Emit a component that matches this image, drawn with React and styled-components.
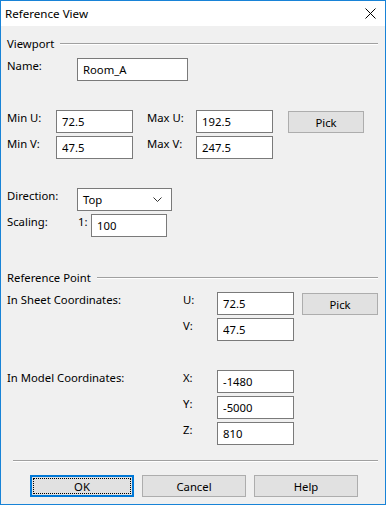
import React from 'react'
import styled, { createGlobalStyle, css } from 'styled-components'

const GlobalStyle = createGlobalStyle`
  html, body {
    margin: 0;
    padding: 0;
    background: #ffffff;
  }
  * {
    box-sizing: border-box;
  }
`

const FONT = `"Noto Sans", "Liberation Sans", sans-serif`
const SIZE = '11.3px'

const Window = styled.div`
  width: 386px;
  height: 505px;
  border: 1px solid #1883d7;
  background: #f0f0f0;
  display: flex;
  flex-direction: column;
  font-family: ${FONT};
  font-size: ${SIZE};
  color: #000;
`

const TitleBar = styled.div`
  height: 25px;
  background: #fff;
  display: flex;
  align-items: center;
  justify-content: space-between;
  padding: 0 9px 0 4px;
  flex-shrink: 0;
`

const Title = styled.span`
  font-size: 11.6px;
  line-height: 16px;
  padding-top: 1px;
`

const Client = styled.div`
  flex: 1;
  display: flex;
  flex-direction: column;
  padding: 0 7px 0 6px;
`

const GroupHeader = styled.div`
  display: flex;
  align-items: center;
  gap: 6px;
  height: 16px;
  margin-top: ${p => p.$top}px;
  line-height: 16px;

  &::after {
    content: '';
    flex: 1;
    height: 0;
    border-top: 1px solid #a0a0a0;
    border-bottom: 1px solid #ffffff;
  }
`

const Row = styled.div`
  display: flex;
  align-items: flex-start;
  margin-top: ${p => p.$top}px;
`

const Label = styled.span`
  width: ${p => p.$w}px;
  flex-shrink: 0;
  line-height: 16px;
  white-space: nowrap;
  margin-left: ${p => p.$ml || 0}px;
`

const fieldBox = css`
  height: 23px;
  border: 1px solid #7a7a7a;
  background: #fff;
  font-family: ${FONT};
  font-size: ${SIZE};
  color: #000;
`

const Field = styled.input`
  ${fieldBox};
  width: ${p => p.$w}px;
  padding: 0 0 0 5px;
  margin: 0;
  outline: none;
`

const Select = styled.div`
  ${fieldBox};
  width: ${p => p.$w}px;
  display: flex;
  align-items: center;
  justify-content: space-between;
  padding: 0 9px 0 5px;
`

const Button = styled.button`
  position: relative;
  width: ${p => p.$w}px;
  height: 22px;
  margin: ${p => p.$dy || 0}px 0 0 ${p => p.$ml || 0}px;
  padding: 0;
  background: #e1e1e1;
  border: 1px solid #adadad;
  font-family: ${FONT};
  font-size: ${SIZE};
  color: #000;

  ${p => p.$default && css`
    border: 2px solid #0078d7;
    &::after {
      content: '';
      position: absolute;
      inset: 1px;
      border: 1px dotted #000;
    }
  `}
`

const Separator = styled.div`
  margin: 15px 0 0 6px;
  border-top: 1px solid #a0a0a0;
  border-bottom: 1px solid #ffffff;
`

const ButtonBar = styled.div`
  display: flex;
  gap: 8px;
  margin: 13px 0 0 23px;
`

const CloseIcon = () => (
  <svg width="11" height="11" viewBox="0 0 11 11">
    <path d="M0.5 0.5 L10.5 10.5 M10.5 0.5 L0.5 10.5" stroke="#000" strokeWidth="1" fill="none" />
  </svg>
)

const Chevron = () => (
  <svg width="9" height="5" viewBox="0 0 9 5">
    <path d="M0.5 0.5 L4.5 4.5 L8.5 0.5" stroke="#333" strokeWidth="1" fill="none" />
  </svg>
)

const App = () => (
  <>
    <GlobalStyle />
    <Window>
      <TitleBar>
        <Title>Reference View</Title>
        <CloseIcon />
      </TitleBar>
      <Client>
        <GroupHeader $top={10}>Viewport</GroupHeader>
        <Row $top={6}>
          <Label $w={70}>Name:</Label>
          <Field $w={111} readOnly value="Room_A" />
        </Row>

        <Row $top={29}>
          <Label $w={49}>Min U:</Label>
          <Field $w={77} readOnly value="72.5" />
          <Label $w={49} $ml={14}>Max U:</Label>
          <Field $w={77} readOnly value="192.5" />
          <Button $w={76} $ml={15} $dy={1}>Pick</Button>
        </Row>
        <Row $top={3}>
          <Label $w={49}>Min V:</Label>
          <Field $w={77} readOnly value="47.5" />
          <Label $w={49} $ml={14}>Max V:</Label>
          <Field $w={77} readOnly value="247.5" />
        </Row>

        <Row $top={29}>
          <Label $w={70}>Direction:</Label>
          <Select $w={95}>
            <span>Top</span>
            <Chevron />
          </Select>
        </Row>
        <Row $top={3}>
          <Label $w={71}>Scaling:</Label>
          <Label $w={13}>1:</Label>
          <Field $w={76} readOnly value="100" />
        </Row>

        <GroupHeader $top={33}>Reference Point</GroupHeader>
        <Row $top={6}>
          <Label $w={176}>In Sheet Coordinates:</Label>
          <Label $w={34}>U:</Label>
          <Field $w={77} readOnly value="72.5" />
          <Button $w={77} $ml={8} $dy={1}>Pick</Button>
        </Row>
        <Row $top={3}>
          <Label $w={176} />
          <Label $w={34}>V:</Label>
          <Field $w={77} readOnly value="47.5" />
        </Row>

        <Row $top={29}>
          <Label $w={176}>In Model Coordinates:</Label>
          <Label $w={34}>X:</Label>
          <Field $w={77} readOnly value="-1480" />
        </Row>
        <Row $top={3}>
          <Label $w={176} />
          <Label $w={34}>Y:</Label>
          <Field $w={77} readOnly value="-5000" />
        </Row>
        <Row $top={3}>
          <Label $w={176} />
          <Label $w={34}>Z:</Label>
          <Field $w={77} readOnly value="810" />
        </Row>

        <Separator />
        <ButtonBar>
          <Button $w={104} $default>OK</Button>
          <Button $w={104}>Cancel</Button>
          <Button $w={104}>Help</Button>
        </ButtonBar>
      </Client>
    </Window>
  </>
)

export default App
